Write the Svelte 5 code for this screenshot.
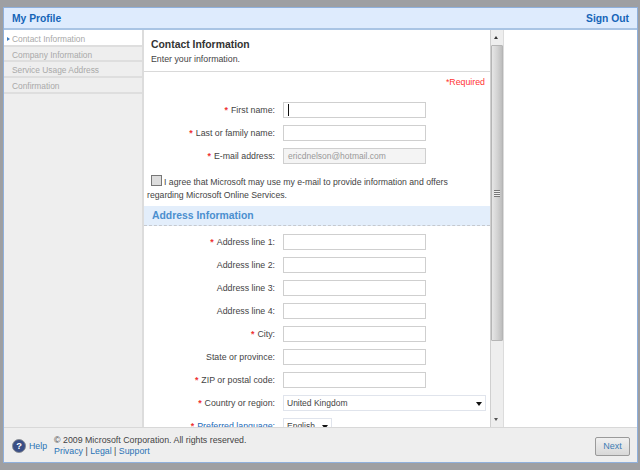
<script lang="ts">
    const steps = ['Contact Information', 'Company Information', 'Service Usage Address', 'Confirmation'];
    const contact = [
        {label: 'First name:', req: true, cls: 'focused'},
        {label: 'Last or family name:', req: true, cls: ''},
        {label: 'E-mail address:', req: true, cls: 'filled', value: 'ericdnelson@hotmail.com'}
    ];
    const address = [
        {label: 'Address line 1:', req: true},
        {label: 'Address line 2:', req: false},
        {label: 'Address line 3:', req: false},
        {label: 'Address line 4:', req: false},
        {label: 'City:', req: true},
        {label: 'State or province:', req: false},
        {label: 'ZIP or postal code:', req: true}
    ];
</script>

<div class="backdrop">
    <div class="dialog">
        <header>
            <span>My Profile</span>
            <span>Sign Out</span>
        </header>
        <div class="middle">
            <nav>
                {#each steps as step, i}
                    <div class="step" class:active={i === 0}>{step}</div>
                {/each}
            </nav>
            <main>
                <div class="title">
                    <h1>Contact Information</h1>
                    <p>Enter your information.</p>
                </div>
                <div class="required">*Required</div>
                <div class="rows first">
                    {#each contact as row}
                        <div class="row">
                            <div class="label">{#if row.req}<b>*</b>{/if}{row.label}</div>
                            <div class="field {row.cls}">{row.value ?? ''}</div>
                        </div>
                    {/each}
                </div>
                <div class="agree">
                    <span class="check"></span>I agree that Microsoft may use my e-mail to provide information and offers<br>
                    regarding Microsoft Online Services.
                </div>
                <h2>Address Information</h2>
                <div class="rows">
                    {#each address as row}
                        <div class="row">
                            <div class="label">{#if row.req}<b>*</b>{/if}{row.label}</div>
                            <div class="field"></div>
                        </div>
                    {/each}
                    <div class="row">
                        <div class="label"><b>*</b>Country or region:</div>
                        <div class="field select">United Kingdom<i></i></div>
                    </div>
                    <div class="row">
                        <div class="label"><b>*</b><a href="#lang">Preferred language:</a></div>
                        <div class="field select short">English<i></i></div>
                    </div>
                </div>
            </main>
            <div class="scrollbar">
                <div class="arrow up"></div>
                <div class="thumb"><span></span></div>
                <div class="arrow down"></div>
            </div>
            <div class="blank"></div>
        </div>
        <footer>
            <svg width="14" height="14" viewBox="0 0 15 15">
                <circle cx="7.5" cy="7.5" r="7" fill="#3a4f86" stroke="#8a8d92"/>
                <text x="7.5" y="11" text-anchor="middle" font-size="10" font-weight="700" font-family="Liberation Sans" fill="#fff">?</text>
            </svg>
            <a class="help" href="#help">Help</a>
            <div class="legal">
                <div>© 2009 Microsoft Corporation. All rights reserved.</div>
                <div><a href="#p">Privacy</a> | <a href="#l">Legal</a> | <a href="#s">Support</a></div>
            </div>
            <button>Next</button>
        </footer>
    </div>
</div>

<style>
    :global(body) {
        margin: 0;
        background: #9e9fa2;
    }
    .backdrop {
        height: 470px;
        padding: 7px 2px 7px 3px;
        box-sizing: border-box;
        font-family: "Liberation Sans", sans-serif;
        font-size: 8.8px;
        color: #444;
    }
    .dialog {
        height: 456px;
        display: flex;
        flex-direction: column;
        border: 1px solid #8fb0dc;
        box-sizing: border-box;
        background: #fff;
    }
    header {
        height: 22px;
        box-sizing: border-box;
        flex: none;
        display: flex;
        justify-content: space-between;
        align-items: center;
        padding: 0 8px;
        background: #deebfd;
        border-bottom: 2px solid #a9c4e4;
        font: 700 10.3px "Liberation Sans", sans-serif;
        color: #1565b8;
    }
    .middle {
        flex: 1;
        display: flex;
        min-height: 0;
    }
    nav {
        width: 140px;
        box-sizing: border-box;
        flex: none;
        background: linear-gradient(#fff 1px, #eeeeee 1px);
        border-right: 2px solid #dcdcdc;
        padding-top: 1px;
    }
    .step {
        height: 13.7px;
        line-height: 16.5px;
        padding-left: 8px;
        border-bottom: 2px solid #dedede;
        color: #a9a9a9;
        font-size: 8.4px;
    }
    .step.active {
        background: #fff;
        position: relative;
    }
    .step.active::before {
        content: '';
        position: absolute;
        left: 3px;
        top: 6px;
        border-left: 3px solid #3d7cc0;
        border-top: 2px solid transparent;
        border-bottom: 2px solid transparent;
    }
    main {
        width: 346px;
        flex: none;
        overflow: hidden;
    }
    .title {
        height: 42px;
        box-sizing: border-box;
        padding: 9px 7px 0;
        border-bottom: 1px solid #d9d9d9;
    }
    h1 {
        margin: 0;
        font: 700 10.4px "Liberation Sans", sans-serif;
        color: #333;
    }
    .title p {
        margin: 4px 0 0;
    }
    .required {
        margin-top: 4px;
        height: 12px;
        line-height: 12px;
        padding-right: 5px;
        text-align: right;
        color: #f33;
    }
    .rows {
        display: flex;
        flex-direction: column;
        gap: 7px;
    }
    .rows.first {
        margin-top: 14px;
    }
    .row {
        display: flex;
        align-items: center;
        gap: 8px;
        height: 16px;
    }
    .label {
        width: 131px;
        text-align: right;
        white-space: nowrap;
    }
    .label b {
        color: #e33;
        font-weight: 700;
        margin-right: 3px;
    }
    .label a {
        color: #1c6ab8;
        text-decoration: none;
    }
    .field {
        width: 143px;
        height: 16px;
        box-sizing: border-box;
        border: 1px solid #cfcfcf;
        background: #fff;
        line-height: 14px;
        padding-left: 4px;
        position: relative;
        font-size: 8.5px;
    }
    .field.focused::before {
        content: '';
        position: absolute;
        left: 4px;
        top: 1px;
        width: 1px;
        height: 12px;
        background: #111;
    }
    .field.filled {
        background: #f4f4f4;
        color: #999;
    }
    .select {
        width: 203px;
        border-color: #e0e4ec;
        padding-left: 3px;
        color: #444;
    }
    .select.short {
        width: 49px;
    }
    .select i {
        position: absolute;
        right: 3px;
        top: 6px;
        border-top: 4px solid #111;
        border-left: 3px solid transparent;
        border-right: 3px solid transparent;
    }
    .agree {
        margin: 11px 0 0 3px;
        line-height: 12.5px;
        font-size: 8.7px;
        color: #444;
        white-space: nowrap;
    }
    .check {
        display: inline-block;
        width: 9px;
        height: 9px;
        border: 1px solid #777;
        background: #ddd;
        margin: 0 2px 0 4px;
        vertical-align: -1px;
    }
    h2 {
        margin: 5px 0 8px;
        height: 20px;
        padding-left: 8px;
        box-sizing: border-box;
        background: #e3eefb;
        border-bottom: 1px dashed #c5c9cf;
        font: 700 10.4px/19px "Liberation Sans", sans-serif;
        color: #4b8fcf;
    }
    .scrollbar {
        width: 14px;
        flex: none;
        background: #eeeeee;
        border-left: 1px solid #cfcfcf;
        border-right: 1px solid #dcdcdc;
        box-sizing: border-box;
        display: flex;
        flex-direction: column;
    }
    .arrow {
        height: 15px;
        flex: none;
        position: relative;
    }
    .arrow::after {
        content: '';
        position: absolute;
        left: 3px;
        border-left: 2.5px solid transparent;
        border-right: 2.5px solid transparent;
    }
    .arrow.up::after {
        top: 6px;
        border-bottom: 3px solid #333;
    }
    .arrow.down {
        margin-top: auto;
    }
    .arrow.down::after {
        top: 6px;
        border-top: 3px solid #555;
    }
    .thumb {
        height: 296px;
        flex: none;
        border-radius: 1px;
        border: 1px solid #b5b5b5;
        box-sizing: border-box;
        background: linear-gradient(to right, #e6e6e6, #d2d2d2 55%, #bdbdbd);
        display: flex;
        align-items: center;
        justify-content: center;
    }
    .thumb span {
        width: 6px;
        height: 7px;
        background: repeating-linear-gradient(to bottom, #777 0 1px, #eee 1px 2px);
    }
    .blank {
        flex: 1;
        background: #fff;
    }
    footer {
        height: 35px;
        flex: none;
        display: flex;
        align-items: center;
        background: #eeeeee;
        border-top: 1px solid #d8d8d8;
        padding: 2px 7px 0 8px;
        box-sizing: border-box;
    }
    footer a {
        color: #2a72b5;
        text-decoration: none;
    }
    .help {
        margin-left: 3px;
    }
    .legal {
        margin-left: 7px;
        line-height: 11px;
        flex: 1;
    }
    button {
        width: 35px;
        height: 19px;
        padding: 0;
        border: 1px solid #9a9a9a;
        border-radius: 2px;
        background: linear-gradient(#f0f0f0, #d8d8d8);
        color: #3d7cb5;
        font: 9px "Liberation Sans", sans-serif;
    }
</style>
